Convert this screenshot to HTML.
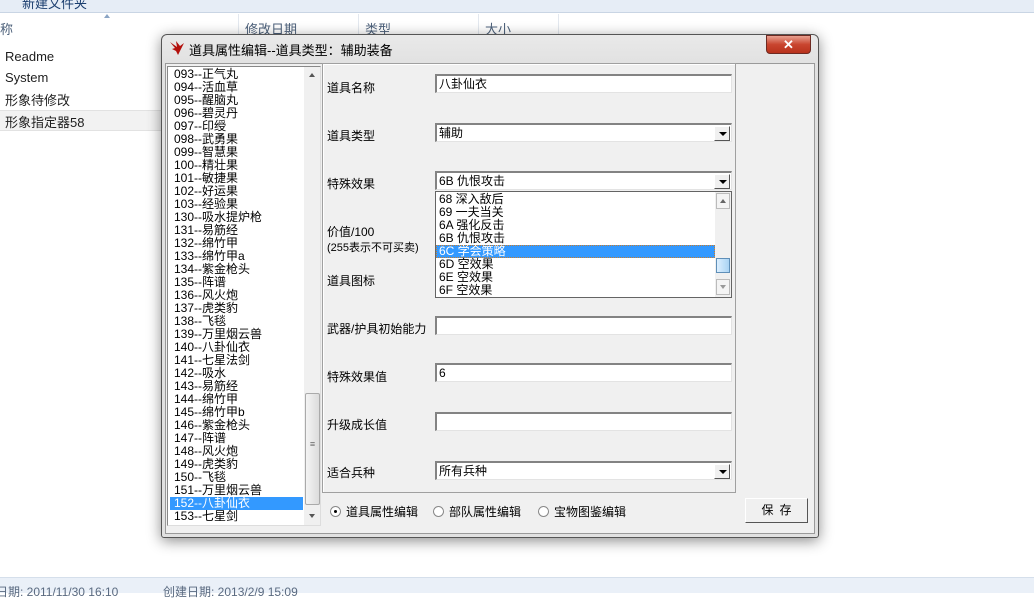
<!DOCTYPE html>
<html><head><meta charset="utf-8"><style>
*{margin:0;padding:0;box-sizing:border-box}
body{width:1034px;height:593px;overflow:hidden;background:#fff;position:relative;font-family:"Liberation Sans","Noto Sans CJK SC",sans-serif;font-size:12px;color:#000}
.a{position:absolute;white-space:nowrap}
.exp{font-size:13px;color:#1e1e1e}
.hdr{color:#4c607a;font-size:13px}
.inp{position:absolute;background:#fff;border-top:2px solid #838383;border-left:2px solid #838383;border-right:1px solid #e3e3e3;border-bottom:1px solid #e3e3e3;height:19px;padding-left:2px;line-height:17px;font-size:12px}
.dd{position:absolute;right:1px;top:1px;width:16px;height:15px;background:#f0f0f0;border:1px solid #fff;border-right-color:#555;border-bottom-color:#555}
.dd:after{content:"";position:absolute;left:4px;top:5px;border-left:4px solid transparent;border-right:4px solid transparent;border-top:4px solid #000}
.li{height:13px;line-height:13px;padding-left:4px;font-size:12px}
.lbl{position:absolute;left:327px;font-size:12px}
.rad{position:absolute;width:11px;height:11px;border-radius:50%;border:1px solid #888;background:#fff}
</style></head><body>
<div class="a" style="left:0;top:0;width:1034px;height:13px;background:#e6edf6;border-bottom:1px solid #c9d5e4"></div>
<div class="a exp" style="left:22px;top:-7px;color:#1a3d6e">新建文件夹</div>
<div class="a" style="left:238px;top:14px;width:1px;height:24px;background:#e3e8ef"></div>
<div class="a" style="left:358px;top:14px;width:1px;height:24px;background:#e3e8ef"></div>
<div class="a" style="left:478px;top:14px;width:1px;height:24px;background:#e3e8ef"></div>
<div class="a" style="left:558px;top:14px;width:1px;height:24px;background:#e3e8ef"></div>
<div class="a hdr" style="left:0;top:19px">称</div>
<div class="a hdr" style="left:245px;top:19px">修改日期</div>
<div class="a hdr" style="left:365px;top:19px">类型</div>
<div class="a hdr" style="left:485px;top:19px">大小</div>
<div class="a" style="left:104px;top:14px;border-left:3px solid transparent;border-right:3px solid transparent;border-bottom:4px solid #8aa4c4"></div>
<div class="a exp" style="left:5px;top:49px">Readme</div>
<div class="a exp" style="left:5px;top:70px">System</div>
<div class="a exp" style="left:5px;top:90px">形象待修改</div>
<div class="a" style="left:0;top:110px;width:170px;height:21px;background:#f2f2f2;border-top:1px solid #e2e2e2;border-bottom:1px solid #e2e2e2"></div>
<div class="a exp" style="left:5px;top:112px">形象指定器58</div>
<div class="a" style="left:0;top:577px;width:1034px;height:16px;background:#eaf0f8;border-top:1px solid #d5dfeb"></div>
<div class="a" style="left:-4px;top:583px;color:#5a6a80">日期: 2011/11/30 16:10</div>
<div class="a" style="left:163px;top:583px;color:#5a6a80">创建日期: 2013/2/9 15:09</div>

<div class="a" style="left:161px;top:34px;width:658px;height:504px;border:1px solid #555;border-radius:6px 6px 3px 3px;background:linear-gradient(#e9e9e9,#e1e1e1 30px);box-shadow:0 3px 14px rgba(0,0,0,.45)"></div>
<div class="a" style="left:165px;top:63px;width:650px;height:471px;background:#f0f0f0;border:1px solid #9a9a9a"></div>
<svg class="a" style="left:168px;top:39px" width="18" height="18" viewBox="0 0 18 18"><path d="M2 3 L9 8 L8 2 L12 7 L16 4 L13 10 L10 16 L8 12 L4 10 L7 9 Z" fill="#b3100c"/></svg>
<div class="a" style="left:189px;top:40px;font-size:13px;color:#000">道具属性编辑--道具类型：辅助装备</div>
<div class="a" style="left:766px;top:35px;width:45px;height:19px;border:1px solid #6d2a22;border-radius:0 0 4px 4px;background:linear-gradient(#e8a090,#c9452f 50%,#b8321c);color:#fff;text-align:center;font-weight:bold;font-size:13px;line-height:17px">✕</div>

<div class="a" style="left:167px;top:66px;width:154px;height:460px;background:#fff;border-top:1px solid #888;border-left:1px solid #888;border-right:1px solid #ddd;border-bottom:1px solid #ddd;overflow:hidden">
<div style="position:absolute;left:2px;top:1px;width:133px">
<div class="li">093--正气丸</div><div class="li">094--活血草</div><div class="li">095--醒脑丸</div><div class="li">096--碧灵丹</div><div class="li">097--印绶</div><div class="li">098--武勇果</div><div class="li">099--智慧果</div><div class="li">100--精壮果</div><div class="li">101--敏捷果</div><div class="li">102--好运果</div><div class="li">103--经验果</div><div class="li">130--吸水提炉枪</div><div class="li">131--易筋经</div><div class="li">132--绵竹甲</div><div class="li">133--绵竹甲a</div><div class="li">134--紫金枪头</div><div class="li">135--阵谱</div><div class="li">136--风火炮</div><div class="li">137--虎类豹</div><div class="li">138--飞毯</div><div class="li">139--万里烟云兽</div><div class="li">140--八卦仙衣</div><div class="li">141--七星法剑</div><div class="li">142--吸水</div><div class="li">143--易筋经</div><div class="li">144--绵竹甲</div><div class="li">145--绵竹甲b</div><div class="li">146--紫金枪头</div><div class="li">147--阵谱</div><div class="li">148--风火炮</div><div class="li">149--虎类豹</div><div class="li">150--飞毯</div><div class="li">151--万里烟云兽</div><div class="li" style="background:#3399ff;color:#fff">152--八卦仙衣</div><div class="li">153--七星剑</div>
</div>
<div style="position:absolute;left:136px;top:0;width:17px;height:458px;background:#f0f0f0">
<div style="position:absolute;left:5px;top:6px;border-left:3px solid transparent;border-right:3px solid transparent;border-bottom:4px solid #555"></div>
<div style="position:absolute;left:1px;top:326px;width:15px;height:112px;border:1px solid #aaa;border-radius:2px;background:linear-gradient(90deg,#f4f4f4,#dcdcdc);text-align:center;font-size:9px;line-height:100px;color:#666">≡</div>
<div style="position:absolute;left:5px;top:447px;border-left:3px solid transparent;border-right:3px solid transparent;border-top:4px solid #555"></div>
</div></div>

<div class="a" style="left:322px;top:63px;width:414px;height:430px;border:1px solid #a0a0a0;box-shadow:inset 1px 1px 0 #fff"></div>
<div class="lbl" style="top:79px">道具名称</div>
<div class="inp" style="left:435px;top:74px;width:297px">八卦仙衣</div>
<div class="lbl" style="top:127px">道具类型</div>
<div class="inp" style="left:435px;top:123px;width:297px">辅助<div class="dd"></div></div>
<div class="lbl" style="top:175px">特殊效果</div>
<div class="inp" style="left:435px;top:171px;width:297px">6B 仇恨攻击<div class="dd"></div></div>
<div class="lbl" style="top:223px">价值/100</div>
<div class="lbl" style="top:239px;font-size:11px">(255表示不可买卖)</div>
<div class="lbl" style="top:272px">道具图标</div>
<div class="lbl" style="top:320px">武器/护具初始能力</div>
<div class="inp" style="left:435px;top:316px;width:297px"></div>
<div class="lbl" style="top:368px">特殊效果值</div>
<div class="inp" style="left:435px;top:363px;width:297px">6</div>
<div class="lbl" style="top:416px">升级成长值</div>
<div class="inp" style="left:435px;top:412px;width:297px"></div>
<div class="lbl" style="top:464px">适合兵种</div>
<div class="inp" style="left:435px;top:461px;width:297px">所有兵种<div class="dd"></div></div>

<div class="a" style="left:435px;top:191px;width:297px;height:107px;background:#fff;border:1px solid #646464">
<div style="position:absolute;left:0;top:1px;width:279px">
<div class="li" style="padding-left:3px">68 深入敌后</div><div class="li" style="padding-left:3px">69 一夫当关</div><div class="li" style="padding-left:3px">6A 强化反击</div><div class="li" style="padding-left:3px">6B 仇恨攻击</div><div class="li" style="padding-left:3px;background:#3399ff;color:#fff;outline:1px dotted #c87d2e;outline-offset:-1px">6C 学会策略</div><div class="li" style="padding-left:3px">6D 空效果</div><div class="li" style="padding-left:3px">6E 空效果</div><div class="li" style="padding-left:3px">6F 空效果</div>
</div>
<div style="position:absolute;left:279px;top:0;width:16px;height:105px;background:#f0f0f0">
<div style="position:absolute;left:1px;top:1px;width:14px;height:16px;border:1px solid #bbb;background:#f4f4f4"><div style="position:absolute;left:3px;top:5px;border-left:3px solid transparent;border-right:3px solid transparent;border-bottom:4px solid #666"></div></div>
<div style="position:absolute;left:1px;top:66px;width:14px;height:15px;border:1px solid #5f8fb8;background:linear-gradient(90deg,#dcefff,#a9d3f3)"></div>
<div style="position:absolute;left:1px;top:87px;width:14px;height:16px;border:1px solid #bbb;background:#f4f4f4"><div style="position:absolute;left:3px;top:5px;border-left:3px solid transparent;border-right:3px solid transparent;border-top:4px solid #999"></div></div>
</div></div>

<div class="rad" style="left:330px;top:506px"><div style="position:absolute;left:3px;top:3px;width:3px;height:3px;background:#000;border-radius:50%"></div></div>
<div class="a" style="left:346px;top:503px">道具属性编辑</div>
<div class="rad" style="left:433px;top:506px"></div>
<div class="a" style="left:449px;top:503px">部队属性编辑</div>
<div class="rad" style="left:538px;top:506px"></div>
<div class="a" style="left:554px;top:503px">宝物图鉴编辑</div>
<div class="a" style="left:745px;top:498px;width:63px;height:25px;border:1px solid #fff;border-right-color:#555;border-bottom-color:#555;background:#f0f0f0;text-align:center;line-height:22px;letter-spacing:6px;padding-left:6px">保存</div>
</body></html>
